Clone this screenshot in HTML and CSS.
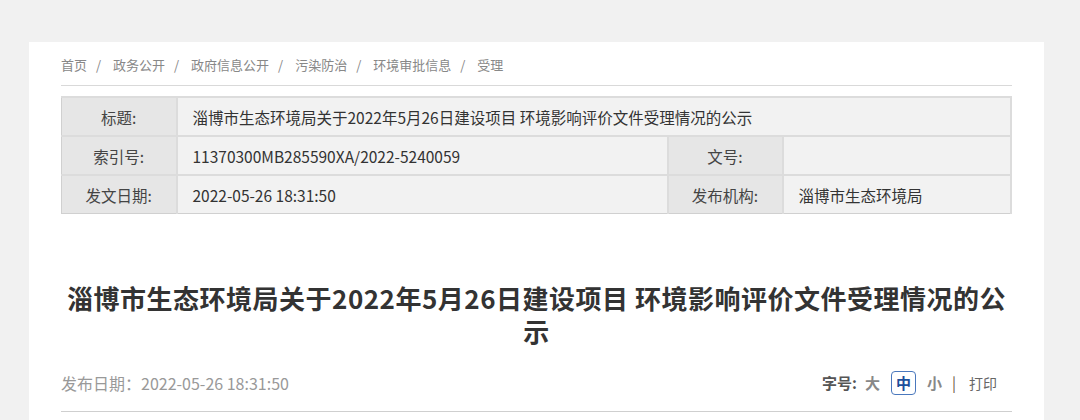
FILE: index.html
```html
<!DOCTYPE html>
<html lang="zh-CN">

<head>
    <meta charset="UTF-8">
    <title>受理情况公示</title>
    <link rel="stylesheet" href="styles.css">
</head>

<body>
    <div class="page">
        <div class="crumbs">
            <a href="#">首页</a><span class="sep">/</span>
            <a href="#">政务公开</a><span class="sep">/</span>
            <a href="#">政府信息公开</a><span class="sep">/</span>
            <a href="#">污染防治</a><span class="sep">/</span>
            <a href="#">环境审批信息</a><span class="sep">/</span>
            <a href="#">受理</a>
        </div>

        <table class="info">
            <colgroup>
                <col class="c-label">
                <col class="c-wide">
                <col class="c-label">
                <col>
            </colgroup>
            <tr>
                <th>标题:</th>
                <td colspan="3">淄博市生态环境局关于2022年5月26日建设项目 环境影响评价文件受理情况的公示</td>
            </tr>
            <tr>
                <th>索引号:</th>
                <td>11370300MB285590XA/2022-5240059</td>
                <th>文号:</th>
                <td></td>
            </tr>
            <tr>
                <th>发文日期:</th>
                <td>2022-05-26 18:31:50</td>
                <th>发布机构:</th>
                <td>淄博市生态环境局</td>
            </tr>
        </table>

        <h1 class="title">淄博市生态环境局关于2022年5月26日建设项目 环境影响评价文件受理情况的公示</h1>

        <div class="meta">
            <span class="date">发布日期：2022-05-26 18:31:50</span>
            <div class="tools">
                <b>字号:</b>
                <span class="size">大</span>
                <span class="size on">中</span>
                <span class="size">小</span>
                <span class="bar">|</span>
                <span class="print">打印</span>
            </div>
        </div>
    </div>
</body>

</html>
```

FILE: styles.css
```css
body {
    margin: 0;
    background-color: #f1f1f1;
    font-family: "Noto Sans CJK SC", "Noto Sans", sans-serif;
    color: #333;
}

.page {
    background-color: white;
    width: 951px;
    margin: 42px 0 0 29px;
    padding: 0 32px;
    height: 400px;
}

.crumbs {
    font-size: 13px;
    line-height: 20px;
    padding: 13px 0 10px;
    border-bottom: 1px solid #d9d9d9;
    color: #888;
}

.crumbs a {
    color: #888;
    text-decoration: none;
}

.crumbs .sep {
    padding: 0 9px;
}

.info {
    width: 951px;
    margin-top: 10px;
    table-layout: fixed;
    border-collapse: collapse;
    font-size: 15.5px;
    border: 1px solid #d0d0d0;
}

.c-label {
    width: 115px;
}

.c-wide {
    width: 491px;
}

.info th,
.info td {
    height: 37px;
    padding: 0;
    border: 1px solid #dcdcdc;
    border-width: 2px 2px 0 0;
    font-weight: normal;
    color: #333;
    white-space: nowrap;
}

.info th {
    background-color: #e6e6e6;
    text-align: center;
    color: #444;
}

.info td {
    background-color: #f2f2f2;
    padding-left: 15px;
    text-align: left;
}

.title {
    margin: 67px 0 0;
    font-size: 26px;
    line-height: 33px;
    letter-spacing: 0.5px;
    text-align: center;
    color: #333;
}

.meta {
    display: flex;
    justify-content: space-between;
    align-items: center;
    margin-top: 24px;
    padding: 0 15px 16px 0;
    border-bottom: 1px solid #cfcfcf;
    font-size: 15px;
    line-height: 20px;
}

.date {
    color: #999;
    font-size: 16px;
}

.tools {
    display: flex;
    align-items: center;
    color: #555;
}

.tools b {
    margin-right: 1px;
}

.size {
    font-weight: bold;
    color: #888;
    padding: 1px 4px;
    margin: 0 2px;
    border: 1px solid transparent;
    border-radius: 4px;
}

.size.on {
    color: #1d4f9c;
    border-color: #4a78bd;
    margin: 0 4px;
}

.bar {
    color: #6b5a45;
    margin: 0 13px 0 3px;
}

.print {
    color: #666;
    font-size: 14px;
}
```
